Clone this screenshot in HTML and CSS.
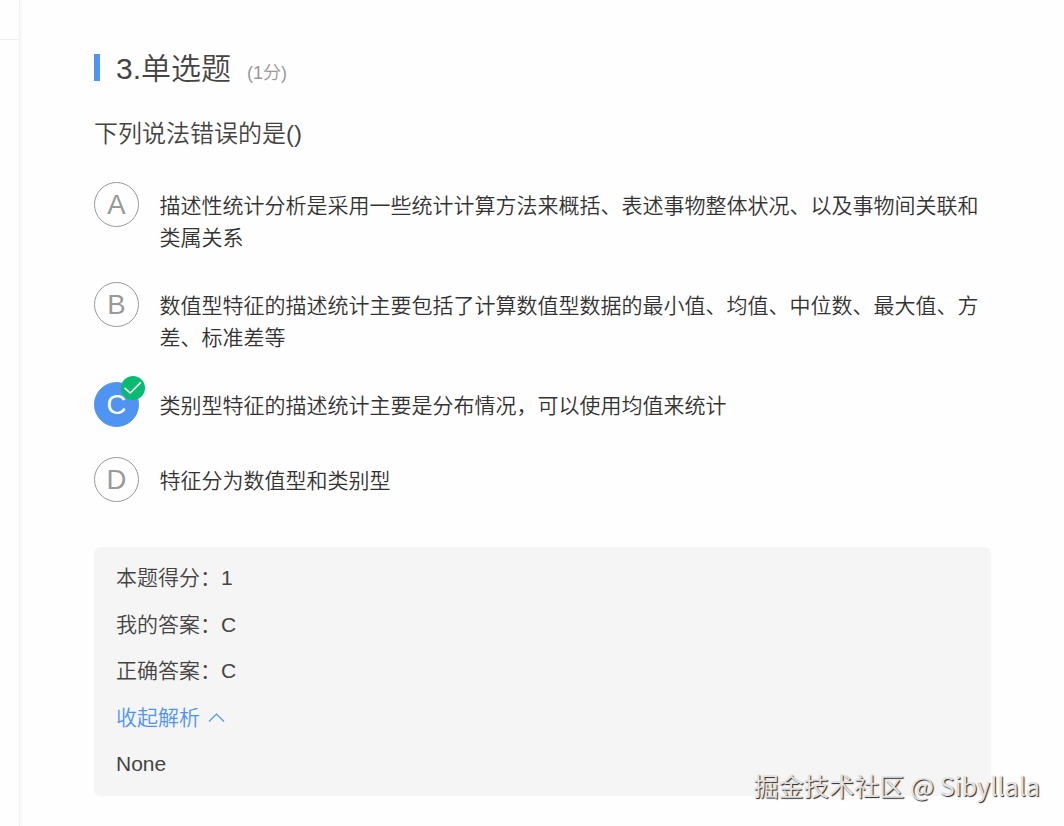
FILE: index.html
```
<!DOCTYPE html>
<html lang="zh-CN">
<head>
  <meta charset="UTF-8">
  <title>单选题</title>
  <meta name="viewport" content="width=device-width, initial-scale=1.0">
  <link rel="stylesheet" href="styles.css">
</head>
<body>

<div class="page">
  <aside class="sidebar">
    <div class="sidebar-head"></div>
  </aside>

  <main class="question">
    <header class="question-head">
      <h1><span>3.</span>单选题</h1>
      <span class="score">(1<span class="unit">分</span>)</span>
    </header>

    <p class="question-text">下列说法错误的是<span>()</span></p>

    <!-- Options -->
    <ul class="options">
      <li>
        <span class="letter">A</span>
        <p>描述性统计分析是采用一些统计计算方法来概括、表述事物整体状况、以及事物间关联和类属关系</p>
      </li>
      <li>
        <span class="letter">B</span>
        <p>数值型特征的描述统计主要包括了计算数值型数据的最小值、均值、中位数、最大值、方差、标准差等</p>
      </li>
      <li>
        <span class="letter selected">C
          <svg class="check" viewBox="0 0 24 24">
            <circle cx="12" cy="12" r="12" fill="#08bb72"/>
            <path d="M3.5 11.8l5.7 5.2L19.8 6.4" fill="none" stroke="#fff" stroke-width="1.6"/>
          </svg>
        </span>
        <p>类别型特征的描述统计主要是分布情况，可以使用均值来统计</p>
      </li>
      <li>
        <span class="letter">D</span>
        <p>特征分为数值型和类别型</p>
      </li>
    </ul>

    <!-- Answer -->
    <section class="analysis">
      <p>本题得分：<span>1</span></p>
      <p>我的答案：<span>C</span></p>
      <p>正确答案：<span>C</span></p>
      <a class="toggle">收起解析
        <svg width="17" height="10" viewBox="0 0 17 10">
          <path d="M1 9.5L8.5 2 16 9.5" fill="none" stroke="#5094f2" stroke-width="1.2"/>
        </svg>
      </a>
      <p><span>None</span></p>
    </section>
  </main>
</div>

<div class="watermark">掘金技术社区 @ Sibyllala</div>

</body>
</html>
```

FILE: styles.css
```
/* Global styles */
* {
  box-sizing: border-box;
}

body {
  font-family: "Liberation Sans", "Noto Sans CJK SC", sans-serif;
  margin: 0;
  background: #fefefe;
  color: #444;
  overflow: hidden;
}

h1,
p,
ul {
  margin: 0;
  padding: 0;
  font-weight: 350;
}

h1 span,
p span {
  font-weight: 400;
}

.page {
  display: flex;
  height: 826px;
}

.sidebar {
  width: 20px;
  border-right: 1px solid #f0f0f0;
  box-shadow: 1px 0 3px rgba(0, 0, 0, 0.04);
}

.sidebar-head {
  height: 40px;
  border-bottom: 1px solid #eee;
}

.question {
  width: 971px;
  padding: 45px 0 0 74px;
}

/* Title */
.question-head {
  display: flex;
  align-items: baseline;
  height: 45px;
  line-height: 47px;
}

.question-head::before {
  content: "";
  width: 6px;
  height: 27px;
  margin-right: 16px;
  align-self: center;
  background: #5094f2;
}

.question-head h1 {
  font-size: 30px;
}

.score {
  margin-left: 16px;
  font-size: 18px;
  color: #999;
}

.unit {
  font-weight: 350;
}

.question-text {
  margin-top: 26px;
  font-size: 24px;
  line-height: 36px;
}

/* Options */
.options {
  margin-top: 30px;
  list-style: none;
}

.options li {
  display: flex;
  gap: 20.5px;
  margin-bottom: 30px;
}

.options p {
  flex: 1;
  padding-top: 8px;
  margin-bottom: -1px;
  font-size: 21px;
  line-height: 31.5px;
  color: #333;
}

.letter {
  position: relative;
  flex: none;
  width: 45px;
  height: 45px;
  border: 1px solid #999;
  border-radius: 50%;
  font-size: 27.5px;
  line-height: 44px;
  text-align: center;
  color: #999;
}

.letter.selected {
  background: #5094f2;
  border-color: #5094f2;
  color: #fff;
}

.check {
  position: absolute;
  top: -7px;
  right: -7px;
  width: 24px;
  height: 24px;
}

/* Answer panel */
.analysis {
  display: flex;
  flex-direction: column;
  gap: 15px;
  height: 249px;
  margin-top: 45px;
  padding: 15px 22px;
  background: #f5f5f5;
  border-radius: 6px;
  font-size: 21px;
  line-height: 31.5px;
}

.toggle {
  display: flex;
  align-items: center;
  gap: 8px;
  font-weight: 350;
  color: #5094f2;
}

.watermark {
  position: absolute;
  right: 24px;
  bottom: 23px;
  font-family: "Noto Sans CJK SC", sans-serif;
  font-size: 25.2px;
  line-height: 36px;
  color: #e2e2e2;
  text-shadow: 1px 1px 1px #222;
}
```
